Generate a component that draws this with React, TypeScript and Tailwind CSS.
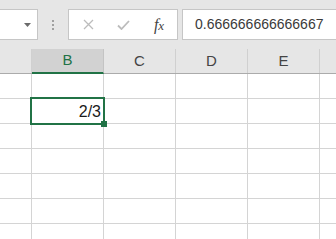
export default function App() {
  const cols = ['B', 'C', 'D', 'E'];
  const rows = [0, 1, 2, 3, 4, 5, 6];

  return (
    <div className="w-[336px] h-[239px] overflow-hidden bg-white select-none" style={{ fontFamily: '"Liberation Sans", Arial, sans-serif' }}>
      {/* formula bar */}
      <div className="flex items-start h-[49px] pt-[9px] bg-[#e6e6e6]">
        <div className="w-[38px] h-[31px] bg-white border border-l-0 border-[#c6c6c6] flex items-center justify-end pr-[6px]">
          <svg width="7" height="4" viewBox="0 0 7 4">
            <path d="M0 0h7L3.5 4z" fill="#6b6b6b" />
          </svg>
        </div>
        <div className="w-[30px] h-[31px] flex flex-col items-center justify-center gap-[2px]">
          <div className="w-[2px] h-[2px] bg-[#a0a0a0]" />
          <div className="w-[2px] h-[2px] bg-[#a0a0a0]" />
          <div className="w-[2px] h-[2px] bg-[#a0a0a0]" />
        </div>
        <div className="w-[110px] h-[31px] bg-white border border-[#c6c6c6] flex items-center">
          <div className="w-[37px] flex justify-center pl-[1px]">
            <svg width="11" height="11" viewBox="0 0 11 11">
              <path d="M1 1l9 9M10 1l-9 9" stroke="#bcbcbc" strokeWidth="1.3" />
            </svg>
          </div>
          <div className="w-[35px] flex justify-center">
            <svg width="13" height="10" viewBox="0 0 13 10">
              <path d="M1 5.5l3.5 3.5L12 1" stroke="#bcbcbc" strokeWidth="1.8" fill="none" />
            </svg>
          </div>
          <div className="w-[36px] flex justify-center">
            <span className="italic text-[16px] leading-none text-[#444]" style={{ fontFamily: '"Liberation Serif", "Times New Roman", serif' }}>
              f<span className="text-[13px]">x</span>
            </span>
          </div>
        </div>
        <div className="w-[4px]" />
        <div className="flex-1 h-[31px] bg-white border border-r-0 border-[#c6c6c6] flex items-center pl-[12px] text-[14px] text-[#3a3a3a]">
          0.666666666666667
        </div>
      </div>

      {/* column headers */}
      <div className="flex h-[25px] bg-[#e6e6e6] border-b border-[#ababab]">
        <div className="w-[32px] shrink-0 border-r border-[#d0d0d0]" />
        {cols.map((c) => (
          <div
            key={c}
            className={
              c === 'B'
                ? 'w-[72px] shrink-0 flex items-center justify-center bg-[#d2d2d2] border-r border-[#c4c4c4] border-b-2 border-b-[#217346] -mb-px text-[15px] text-[#217346]'
                : 'w-[72px] shrink-0 flex items-center justify-center border-r border-[#d0d0d0] text-[15px] text-[#444]'
            }
          >
            {c}
          </div>
        ))}
        <div className="flex-1" />
      </div>

      {/* grid */}
      {rows.map((r) => (
        <div key={r} className="flex h-[25px] border-b border-[#d4d4d4]">
          <div className="w-[32px] shrink-0 border-r border-[#d4d4d4]" />
          {cols.map((c) => (
            <div key={c} className={r === 1 && c === 'B' ? 'relative z-10 w-[72px] shrink-0 border-r border-[#d4d4d4]' : 'w-[72px] shrink-0 border-r border-[#d4d4d4]'}>
              {r === 1 && c === 'B' && (
                <>
                  <div className="absolute left-[-2px] top-[-2px] right-[-2px] bottom-[-2px] border-2 border-[#217346]" />
                  <div className="absolute right-[2px] top-[1px] bottom-0 flex items-center text-[16px] text-[#1a1a1a]">2/3</div>
                  <div className="absolute right-[-4px] bottom-[-4px] w-[6px] h-[6px] bg-[#217346]" />
                </>
              )}
            </div>
          ))}
          <div className="flex-1" />
        </div>
      ))}
    </div>
  );
}
